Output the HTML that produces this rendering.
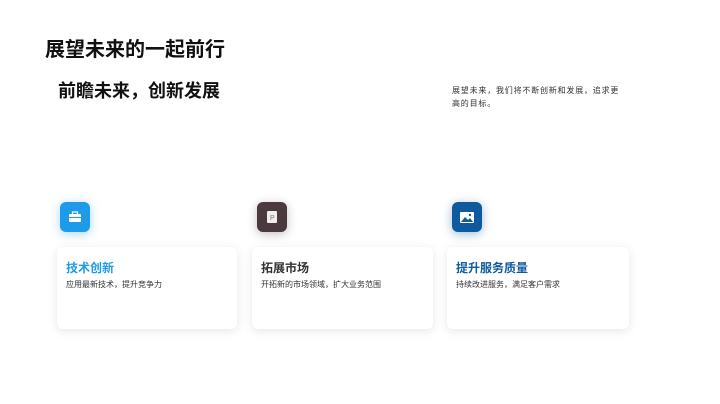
<!DOCTYPE html>
<html><head><meta charset="utf-8"><style>
body{margin:0;width:720px;height:404px;background:#fff;font-family:"Liberation Sans","Noto Sans CJK SC",sans-serif;position:relative;overflow:hidden;color:#222}
.a{position:absolute;white-space:nowrap}
.ic{position:absolute;width:30px;height:30px;border-radius:6px;display:flex;align-items:center;justify-content:center}
.card{position:absolute;top:247px;height:82px;background:#fff;border-radius:6px;box-shadow:0 2px 10px rgba(0,0,0,0.10)}
.card h3{margin:0;position:absolute;left:9px;top:12px;font-size:12px;font-weight:bold}
.card p{margin:0;position:absolute;left:9px;top:32px;font-size:8px;color:#333}
</style></head><body>
<div class="a" style="left:45px;top:33px;font-size:20px;font-weight:bold;color:#111">展望未来的一起前行</div>
<div class="a" style="left:58px;top:77px;font-size:18px;font-weight:bold;color:#111">前瞻未来，创新发展</div>
<div class="a" style="left:452px;top:84px;font-size:8px;line-height:13px;color:#333;letter-spacing:0.8px">展望未来，我们将不断创新和发展，追求更<br>高的目标。</div>

<div class="ic" style="left:60px;top:202px;background:#1e9be8;box-shadow:0 2px 10px rgba(30,155,232,0.4)">
<svg width="14" height="12" viewBox="0 0 14 12"><rect x="1" y="3" width="12" height="8" rx="1" fill="#fff"/><rect x="4.5" y="1" width="5" height="3" fill="none" stroke="#fff" stroke-width="1.2"/><rect x="1" y="6" width="12" height="1" fill="#1e9be8"/></svg></div>
<div class="ic" style="left:257px;top:202px;background:#4a3a3e;box-shadow:0 2px 10px rgba(0,0,0,0.25)">
<svg width="10" height="12" viewBox="0 0 10 12"><rect x="0" y="0" width="10" height="12" rx="1" fill="#eee"/><text x="3" y="9" font-size="7" fill="#777" font-family="Liberation Sans">P</text></svg></div>
<div class="ic" style="left:452px;top:202px;background:#0f5a9e;box-shadow:0 2px 10px rgba(15,90,158,0.4)">
<svg width="14" height="11" viewBox="0 0 14 11"><rect x="0" y="0" width="14" height="11" rx="1" fill="#fff"/><path d="M1 10 L5 5 L8 8 L10 6 L13 10Z" fill="#0f5a9e"/><circle cx="10" cy="3" r="1.2" fill="#0f5a9e"/></svg></div>

<div class="card" style="left:57px;width:180px"><h3 style="color:#1e9be8">技术创新</h3><p>应用最新技术，提升竞争力</p></div>
<div class="card" style="left:252px;width:181px"><h3 style="color:#333">拓展市场</h3><p>开拓新的市场领域，扩大业务范围</p></div>
<div class="card" style="left:447px;width:182px"><h3 style="color:#0f5a9e">提升服务质量</h3><p>持续改进服务，满足客户需求</p></div>
</body></html>
